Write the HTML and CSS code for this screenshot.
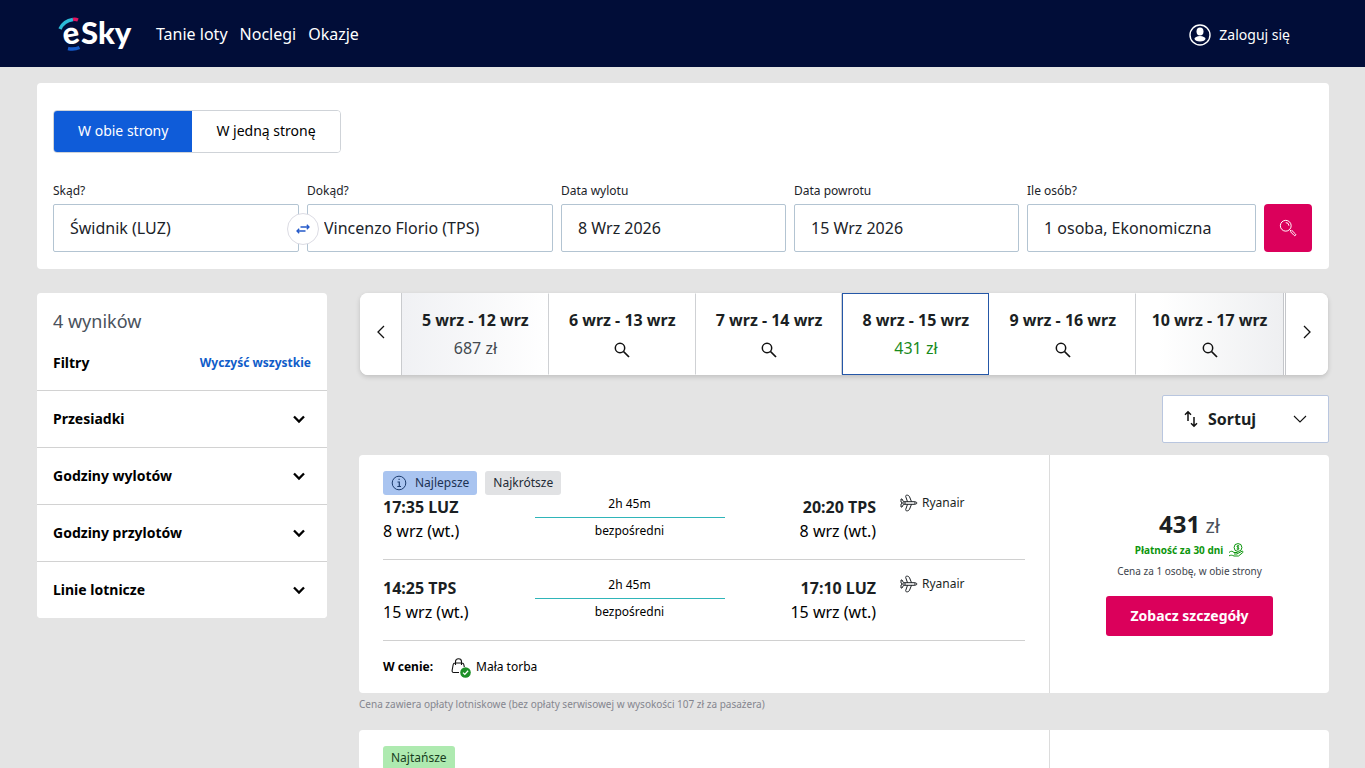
FILE: index.html
```
<!DOCTYPE html>
<html lang="pl">
<head>
<meta charset="utf-8">
<meta name="viewport" content="width=device-width, initial-scale=1">
<title>eSky</title>
<link rel="stylesheet" href="styles.css">
</head>
<body>
<svg class="defs" aria-hidden="true">
  <symbol id="chev" viewBox="0 0 16 16"><path d="M3 5.500l5 5 5-5" fill="none" stroke="currentColor" stroke-width="2.300"/></symbol>
  <symbol id="lens" viewBox="0 0 16 16"><circle cx="6" cy="6" r="4.700" fill="none" stroke="currentColor" stroke-width="1.500"/><path d="M9.500 9.500l5.500 5.500" stroke="currentColor" stroke-width="1.700"/></symbol>
  <symbol id="plane" viewBox="0 0 18 18"><g fill="none" stroke="currentColor" stroke-width="1" stroke-linejoin="round"><path d="M3.500 7.700H14c1.500 0 3 .600 3 1.300s-1.500 1.300-3 1.300H3.500L2 13H1V10L2.500 9 1 8V5h1z"/><path d="M7.500 7.700L5.700 2.500C5.500 1.300 6.500 1 7.500 1.200c1 .200 1.500.600 2 1.500L11.500 7.700M7.500 10.300L5.700 15.500c-.200 1.200.8 1.500 1.800 1.300 1-.200 1.500-.600 2-1.500l2-5M2.500 9H6M14 9h1.500"/></g></symbol>
</svg>
<header class="top">
  <a class="logo" href="#" aria-label="eSky">
    <svg width="80" height="48" viewBox="0 -6 80 48">
      <path d="M3 13A17 15 0 0 1 16 3.500" fill="none" stroke="#2cbbd8" stroke-width="3.500"/>
      <path d="M16 3.500Q18.500 3 21 4" fill="none" stroke="#e0145f" stroke-width="3.500"/>
      <path d="M11 32.500Q17 34 22.500 31.500" fill="none" stroke="#1559c8" stroke-width="3.500"/>
      <text class="logo-text" x="6" y="28" transform="rotate(-10 14 22)">e</text>
      <text class="logo-text" x="24" y="28">Sky</text>
    </svg>
  </a>
  <nav class="nav"><a href="#">Tanie loty</a><a href="#">Noclegi</a><a href="#">Okazje</a></nav>
  <a class="login" href="#">
    <svg width="22" height="22" viewBox="0 0 22 22"><circle cx="11" cy="11" r="10" fill="none" stroke="#fff" stroke-width="1.400"/><ellipse cx="11" cy="7.500" rx="3.500" ry="4" fill="#fff"/><ellipse cx="11" cy="14.800" rx="5.500" ry="2.700" fill="#fff"/></svg>
    Zaloguj się
  </a>
</header>
<main class="page">
  <section class="search">
    <div class="trip">
      <button class="trip-option trip-active" type="button">W obie strony</button>
      <button class="trip-option" type="button">W jedną stronę</button>
    </div>
    <form class="fields">
      <div class="field"><label for="from">Skąd?</label><input id="from" type="text" value="Świdnik (LUZ)"></div>
      <div class="field">
        <label for="to">Dokąd?</label><input id="to" type="text" value="Vincenzo Florio (TPS)">
        <button class="swap" type="button" aria-label="Zamień"><svg width="14" height="14" viewBox="0 0 14 14" fill="none" stroke="#2459c9" stroke-width="1.300"><path d="M4.500 5H13M10.800 2.800L13 5l-2.200 2.200M9.500 9H1M3.200 6.800L1 9l2.200 2.200"/></svg></button>
      </div>
      <div class="field"><label for="out">Data wylotu</label><input id="out" type="text" value="8 Wrz 2026"></div>
      <div class="field"><label for="back">Data powrotu</label><input id="back" type="text" value="15 Wrz 2026"></div>
      <div class="field"><label for="pax">Ile osób?</label><input id="pax" type="text" value="1 osoba, Ekonomiczna"></div>
      <button class="submit" type="submit" aria-label="Szukaj"><svg width="18" height="20" viewBox="0 0 20 20" fill="none" stroke="#fff" stroke-width="1.100"><circle cx="7.500" cy="7.500" r="6"/><path d="M7.500 4a3.500 3.500 0 0 1 3.500 3.500M11.700 11.700l1.600 1.600"/><path d="M12.800 14.200l1.500-1.500 4 4a1 1 0 0 1-1.500 1.500z"/></svg></button>
    </form>
  </section>
  <div class="columns">
    <aside class="filters">
      <div class="filters-head">
        <h1>4 wyników</h1>
        <div class="filters-row"><h2>Filtry</h2><a href="#">Wyczyść wszystkie</a></div>
      </div>
      <button class="filter" type="button">Przesiadki<svg width="16" height="16"><use href="#chev"/></svg></button>
      <button class="filter" type="button">Godziny wylotów<svg width="16" height="16"><use href="#chev"/></svg></button>
      <button class="filter" type="button">Godziny przylotów<svg width="16" height="16"><use href="#chev"/></svg></button>
      <button class="filter" type="button">Linie lotnicze<svg width="16" height="16"><use href="#chev"/></svg></button>
    </aside>
    <div class="results">
      <div class="dates">
        <button class="arrow" type="button" aria-label="Wcześniej"><svg width="8" height="14" viewBox="0 0 8 14"><path d="M7 1L1 7l6 6" fill="none" stroke="#111" stroke-width="1.300"/></svg></button>
        <button class="date date-first" type="button"><b>5 wrz - 12 wrz</b><span>687 zł</span></button>
        <button class="date" type="button"><b>6 wrz - 13 wrz</b><span><svg width="16" height="16"><use href="#lens"/></svg></span></button>
        <button class="date" type="button"><b>7 wrz - 14 wrz</b><span><svg width="16" height="16"><use href="#lens"/></svg></span></button>
        <button class="date date-selected" type="button"><b>8 wrz - 15 wrz</b><span>431 zł</span></button>
        <button class="date" type="button"><b>9 wrz - 16 wrz</b><span><svg width="16" height="16"><use href="#lens"/></svg></span></button>
        <button class="date date-last" type="button"><b>10 wrz - 17 wrz</b><span><svg width="16" height="16"><use href="#lens"/></svg></span></button>
        <button class="arrow arrow-next" type="button" aria-label="Później"><svg width="8" height="14" viewBox="0 0 8 14"><path d="M1 1l6 6-6 6" fill="none" stroke="#111" stroke-width="1.300"/></svg></button>
      </div>
      <button class="sort" type="button">
        <svg width="14" height="18" viewBox="0 0 14 18" fill="none" stroke="#111" stroke-width="1.500"><path d="M4 11V2M1 4.800L4 1.800l3 3M10 7v9M7 13.200l3 3 3-3"/></svg>
        <span>Sortuj</span>
        <svg width="14" height="8" viewBox="0 0 14 8"><path d="M1 1l6 6 6-6" fill="none" stroke="#111" stroke-width="1.100"/></svg>
      </button>
      <article class="offer">
        <div class="offer-main">
          <div class="badges">
            <span class="badge badge-best"><svg width="16" height="16" viewBox="0 0 16 16" fill="none" stroke="#1d3c6e" stroke-width="1"><circle cx="8" cy="8" r="6.800"/><path d="M6.500 7h1.800v4.500M6.300 11.500h3.700M7.500 4.400h1.200" stroke-width="1.200"/></svg>Najlepsze</span>
            <span class="badge">Najkrótsze</span>
          </div>
          <div class="leg">
            <div class="stop"><b>17:35 LUZ</b><span>8 wrz (wt.)</span></div>
            <div class="route"><span>2h 45m</span><i></i><span>bezpośredni</span></div>
            <div class="stop stop-end"><b>20:20 TPS</b><span>8 wrz (wt.)</span></div>
            <div class="airline"><svg width="18" height="18"><use href="#plane"/></svg>Ryanair</div>
          </div>
          <div class="leg leg-return">
            <div class="stop"><b>14:25 TPS</b><span>15 wrz (wt.)</span></div>
            <div class="route"><span>2h 45m</span><i></i><span>bezpośredni</span></div>
            <div class="stop stop-end"><b>17:10 LUZ</b><span>15 wrz (wt.)</span></div>
            <div class="airline"><svg width="18" height="18"><use href="#plane"/></svg>Ryanair</div>
          </div>
          <div class="included">
            <b>W cenie:</b>
            <span class="bag"><svg width="20" height="20" viewBox="0 0 20 20"><path d="M8 14.500H2.800C1 14.500 1 13 1.200 12l1-5.500C2.400 5.500 3 5 4 5h7c1 0 1.600.500 1.800 1.500L13.300 9M4.500 7V3.500C4.500 2 5.500.700 7.500.700s3 1.300 3 2.800V7" fill="none" stroke="#111" stroke-width="1.100"/><circle cx="14.500" cy="14.500" r="5.300" fill="#1c8f27"/><path d="M12 14.600l1.800 1.800 3.300-3.600" fill="none" stroke="#fff" stroke-width="1.300"/></svg>Mała torba</span>
          </div>
        </div>
        <div class="offer-side">
          <div class="price"><b>431</b> zł</div>
          <div class="later">Płatność za 30 dni<svg width="16" height="14" viewBox="0 0 16 14" fill="none" stroke="#0d960d" stroke-width="1"><circle cx="10" cy="4.500" r="3.900"/><path d="M11.200 3c-2-1-3 .900-1.200 1.500 1.700.500.800 2.300-1.300 1.400M10 2v5M1 9.500c2-1.800 3.500-1.500 5 0h3c1 0 1 1.500 0 1.500H6M9.500 10.500L14 8.300c1-.400 1.500.700.700 1.300L10.500 13H6c-2-1-3-1-5-.200"/></svg></div>
          <div class="per">Cena za 1 osobę, w obie strony</div>
          <button class="details" type="button">Zobacz szczegóły</button>
        </div>
      </article>
      <p class="note">Cena zawiera opłaty lotniskowe (bez opłaty serwisowej w wysokości 107 zł za pasażera)</p>
      <article class="offer">
        <div class="offer-main"><div class="badges"><span class="badge badge-cheap">Najtańsze</span></div></div>
        <div class="offer-side"></div>
      </article>
    </div>
  </div>
</main>
</body>
</html>
```
FILE: styles.css
```
*, *::before, *::after { box-sizing: border-box; }
body { margin: 0; background: #e4e4e4; color: #000; font: 12px/16px "Noto Sans", sans-serif; }
button, input { font: inherit; color: inherit; margin: 0; }
button { padding: 0; border: 0; background: #fff; cursor: pointer; }
a { color: inherit; text-decoration: none; }
h1, h2, p { margin: 0; }
svg { display: block; flex: none; }
.defs { position: absolute; width: 0; height: 0; }

.top { display: flex; align-items: center; min-height: 67px; padding: 0 75px 0 57px; background: #010d38; color: #fff; }
.logo { margin-right: 19px; }
.logo-text { font-family: Lato, sans-serif; font-weight: 900; font-size: 31px; fill: #fff; }
.nav { display: flex; gap: 12px; font-size: 16px; line-height: 24px; }
.login { display: flex; align-items: center; gap: 8px; margin-left: auto; padding-top: 3px; font-size: 14px; line-height: 20px; }

.page { padding: 16px 36px 24px 37px; }
.search { padding: 27px 17px 17px 16px; background: #fff; border-radius: 4px; }
.trip { display: inline-flex; border: 1px solid #cfd3d8; border-radius: 4px; overflow: hidden; }
.trip-option { padding: 10px 24px 11px; font-size: 14px; line-height: 20px; }
.trip-active { background: #0f5cd9; color: #fff; }
.fields { display: grid; grid-template-columns: 246fr 246fr 225fr 225fr 229fr 48px; gap: 8px; align-items: end; margin-top: 30px; }
.field { position: relative; min-width: 0; color: #1b2329; }
.field label { display: block; margin-bottom: 5px; }
.field input { display: block; width: 100%; height: 48px; padding: 0 16px; border: 1px solid #b3c4d2; border-radius: 2px; background: #fff; font-size: 16px; }
.swap { position: absolute; left: -20px; bottom: 7px; display: grid; place-items: center; width: 32px; height: 32px; border: 1px solid #dcdce4; border-radius: 50%; }
.submit { display: grid; place-items: center; height: 48px; border-radius: 4px; background: #db005b; }

.columns { display: grid; grid-template-columns: 290px minmax(0, 1fr); gap: 32px; align-items: start; margin-top: 24px; }
.filters { background: #fff; border-radius: 4px; overflow: hidden; }
.filters-head { padding: 16px 16px 17px; }
.filters-head h1 { font-size: 18px; line-height: 24px; font-weight: 400; color: #4a525c; }
.filters-row { display: flex; justify-content: space-between; align-items: center; margin-top: 20px; }
.filters-row h2 { font-size: 14px; line-height: 20px; }
.filters-row a { font-weight: 700; color: #0f5cc9; }
.filter { display: flex; justify-content: space-between; align-items: center; width: 100%; padding: 18px 20px 18px 16px; border-top: 1px solid #d2d2d2; font-size: 14px; line-height: 20px; font-weight: 700; }

.dates { display: grid; grid-template-columns: 42px repeat(6, minmax(0, 1fr)) 45px; margin: 0 1px; background: #fff; border-radius: 8px; box-shadow: 0 2px 5px rgba(0, 0, 0, .16); overflow: hidden; }
.arrow { display: grid; place-items: center; padding-bottom: 4px; border-right: 1px solid #c9cbce; }
.arrow-next { border-right: 0; border-left: 3px double #c4c6ca; }
.date { padding: 14px 0; border: 1px solid transparent; border-right-color: #cfd1d4; font-size: 16px; line-height: 24px; color: #444a50; }
.date b { display: block; color: #1b1f23; margin-bottom: 4px; }
.date span { display: grid; place-items: center; min-height: 24px; }
.date svg { margin-top: 4px; color: #111; }
.date-first { background: linear-gradient(to right, #f0f1f4, #fff) border-box; }
.date-last { background: linear-gradient(to right, #fff 15%, #eeeff1) border-box; border-right-color: transparent; }
.date-selected { border-color: #2557a7; color: #198a1c; }

.sort { display: flex; align-items: center; gap: 10px; width: 167px; min-height: 48px; margin: 20px 0 12px auto; padding: 0 21px; border: 1px solid #b9c6df; border-radius: 2px; font-size: 16px; font-weight: 700; color: #1b1f23; }
.sort span { flex: 1; text-align: left; }

.offer { display: grid; grid-template-columns: minmax(0, 1fr) 280px; background: #fff; border-radius: 4px; }
.offer-main { padding: 16px 24px 0; }
.badges { display: flex; gap: 8px; }
.badge { display: flex; align-items: center; gap: 8px; padding: 4px 8px; border-radius: 3px; background: #e1e2e4; color: #232b36; }
.badge-best { background: #a9c4f0; color: #1c3254; }
.badge-cheap { background: #aeeab0; color: #173d1d; }
.leg { display: grid; grid-template-columns: 1fr 190px 1fr 149px; padding-bottom: 16px; border-bottom: 1px solid #d0d0d0; }
.leg-return { padding-top: 16px; }
.stop { font-size: 16px; line-height: 24px; }
.stop b, .stop span { display: block; }
.stop b { color: #1b1f23; }
.stop-end { text-align: right; }
.route { padding-top: 1px; text-align: center; }
.route span { display: block; }
.route i { display: block; height: 1px; margin: 5px 0; background: #2fb5b9; }
.airline { display: flex; align-items: center; align-self: start; height: 16px; gap: 4px; padding-left: 24px; color: #1b1f23; }
.included { display: flex; align-items: center; gap: 18px; padding: 15px 0; }
.bag { display: flex; align-items: center; gap: 5px; }
.bag svg { margin-top: 2px; }
.offer-side { display: flex; flex-direction: column; align-items: center; justify-content: center; padding: 2px 0 4px; border-left: 1px solid #dcdcdc; }
.price { font-size: 20px; line-height: 28px; color: #4a525c; }
.price b { font-size: 24px; color: #1b1f23; }
.later { display: flex; align-items: center; gap: 5px; font-size: 10px; line-height: 20px; font-weight: 700; color: #0d960d; }
.per { margin-top: 3px; font-size: 10px; color: #3d444c; }
.details { margin-top: 17px; padding: 10px 24px; border-radius: 3px; background: #db005b; color: #fff; font-size: 14px; line-height: 20px; font-weight: 700; }
.note { margin: 3px 0 18px; font-size: 10px; color: #85868f; }
```
